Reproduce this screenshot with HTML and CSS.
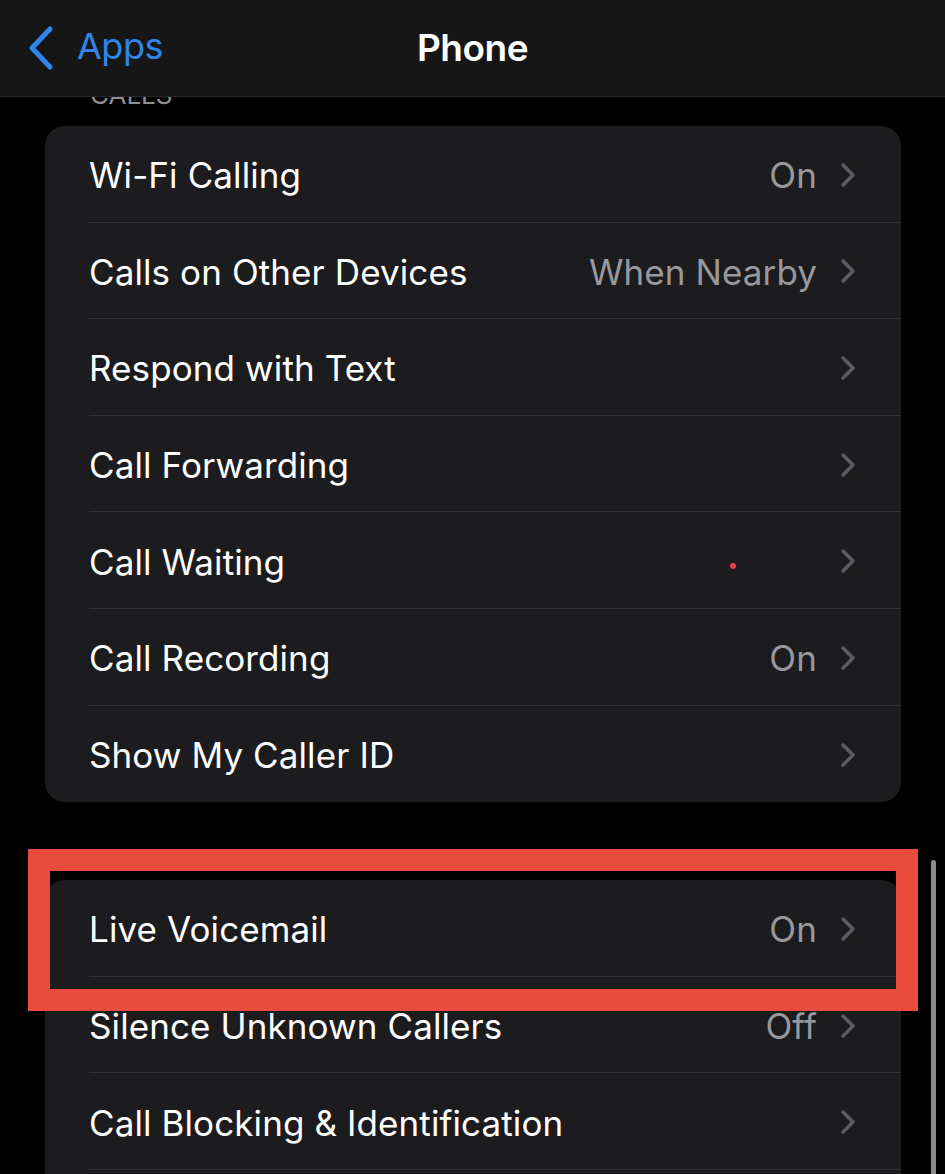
FILE: index.html
```html
<!DOCTYPE html>
<html lang="en">
<head>
  <meta charset="UTF-8">
  <meta name="viewport" content="width=device-width, initial-scale=1.0">
  <title>Phone</title>
  <link rel="stylesheet" href="styles.css">
</head>
<body>
  <div class="screen">
    <div class="nav">
      <a class="back" href="#">
        <svg class="back-icon" viewBox="0 0 28 44" width="28" height="44">
          <path d="M23 3 L5 22 L23 41" fill="none" stroke="#2f86e8" stroke-width="5" stroke-linecap="round" stroke-linejoin="round"/>
        </svg>
        <span>Apps</span>
      </a>
      <div class="title">Phone</div>
    </div>

    <div class="content">
      <div class="section-label">CALLS</div>

      <div class="group">
        <div class="row"><div class="row-body"><span class="label">Wi-Fi Calling</span><span class="value">On</span><svg class="chev" viewBox="0 0 16 26"><path d="M3 3 L13 13 L3 23"/></svg></div></div>
        <div class="row"><div class="row-body"><span class="label">Calls on Other Devices</span><span class="value">When Nearby</span><svg class="chev" viewBox="0 0 16 26"><path d="M3 3 L13 13 L3 23"/></svg></div></div>
        <div class="row"><div class="row-body"><span class="label">Respond with Text</span><svg class="chev" viewBox="0 0 16 26"><path d="M3 3 L13 13 L3 23"/></svg></div></div>
        <div class="row"><div class="row-body"><span class="label">Call Forwarding</span><svg class="chev" viewBox="0 0 16 26"><path d="M3 3 L13 13 L3 23"/></svg></div></div>
        <div class="row"><div class="row-body"><span class="label">Call Waiting</span><svg class="chev" viewBox="0 0 16 26"><path d="M3 3 L13 13 L3 23"/></svg></div></div>
        <div class="row"><div class="row-body"><span class="label">Call Recording</span><span class="value">On</span><svg class="chev" viewBox="0 0 16 26"><path d="M3 3 L13 13 L3 23"/></svg></div></div>
        <div class="row"><div class="row-body"><span class="label">Show My Caller ID</span><svg class="chev" viewBox="0 0 16 26"><path d="M3 3 L13 13 L3 23"/></svg></div></div>
      </div>

      <div class="group">
        <div class="row"><div class="row-body"><span class="label">Live Voicemail</span><span class="value">On</span><svg class="chev" viewBox="0 0 16 26"><path d="M3 3 L13 13 L3 23"/></svg></div></div>
        <div class="row"><div class="row-body"><span class="label">Silence Unknown Callers</span><span class="value">Off</span><svg class="chev" viewBox="0 0 16 26"><path d="M3 3 L13 13 L3 23"/></svg></div></div>
        <div class="row"><div class="row-body"><span class="label">Call Blocking &amp; Identification</span><svg class="chev" viewBox="0 0 16 26"><path d="M3 3 L13 13 L3 23"/></svg></div></div>
        <div class="row"><div class="row-body"><span class="label">Blocked Contacts</span><svg class="chev" viewBox="0 0 16 26"><path d="M3 3 L13 13 L3 23"/></svg></div></div>
      </div>
    </div>

    <div class="red-dot"></div>
    <div class="highlight"></div>
    <div class="scrollbar"></div>
  </div>
</body>
</html>
```

FILE: styles.css
```css
html, body {
  margin: 0;
  padding: 0;
  background: #000;
}
body {
  font-family: Inter, "Liberation Sans", sans-serif;
  color: #fff;
}
.screen {
  position: relative;
  width: 945px;
  height: 1174px;
  overflow: hidden;
  background: #000;
}
.nav {
  height: 96px;
  background: #161616;
  border-bottom: 1px solid #262626;
  display: flex;
  align-items: center;
  justify-content: center;
  position: relative;
  z-index: 2;
}
.back {
  position: absolute;
  left: 27px;
  top: 26px;
  display: flex;
  align-items: center;
  gap: 22px;
  color: #2f86e8;
  text-decoration: none;
  font-size: 36px;
  letter-spacing: -0.5px;
}
.back span {
  margin-top: -4px;
}
.title {
  font-size: 37px;
  font-weight: 600;
  letter-spacing: -0.5px;
  margin-top: -2px;
}
.content {
  padding: 0 44px 0 45px;
  overflow: hidden;
}
.section-label {
  margin: -27px 0 0 45px;
  height: 56px;
  line-height: 50px;
  font-size: 26px;
  color: #8e8e93;
}
.group {
  background: #1c1c1e;
  border-radius: 20px;
  margin-bottom: 78px;
}
.row {
  padding-left: 44px;
  height: 96.6px;
}
.row-body {
  height: 100%;
  box-sizing: border-box;
  display: flex;
  align-items: center;
  padding-right: 44px;
  border-bottom: 1px solid #333335;
}
.row:last-child .row-body {
  border-bottom: none;
}
.label {
  flex: 1;
  font-size: 35px;
  letter-spacing: 0.1px;
  color: #fff;
  margin-top: 3px;
}
.value {
  font-size: 35px;
  letter-spacing: 0.1px;
  color: #98989d;
  margin: 3px 23px 0 0;
}
.chev {
  width: 16px;
  height: 26px;
  margin: 2px 1px 0 0;
}
.chev path {
  fill: none;
  stroke: #5c5c60;
  stroke-width: 3.5;
  stroke-linecap: round;
  stroke-linejoin: round;
}
.red-dot {
  position: absolute;
  left: 730px;
  top: 563px;
  width: 6px;
  height: 6px;
  border-radius: 50%;
  background: #e5404b;
}
.highlight {
  position: absolute;
  left: 28px;
  top: 849px;
  width: 846px;
  height: 118px;
  border: 22px solid #e84c3d;
}
.scrollbar {
  position: absolute;
  left: 931px;
  top: 860px;
  width: 5px;
  height: 330px;
  border-radius: 3px;
  background: #8a8a8a;
}
```
